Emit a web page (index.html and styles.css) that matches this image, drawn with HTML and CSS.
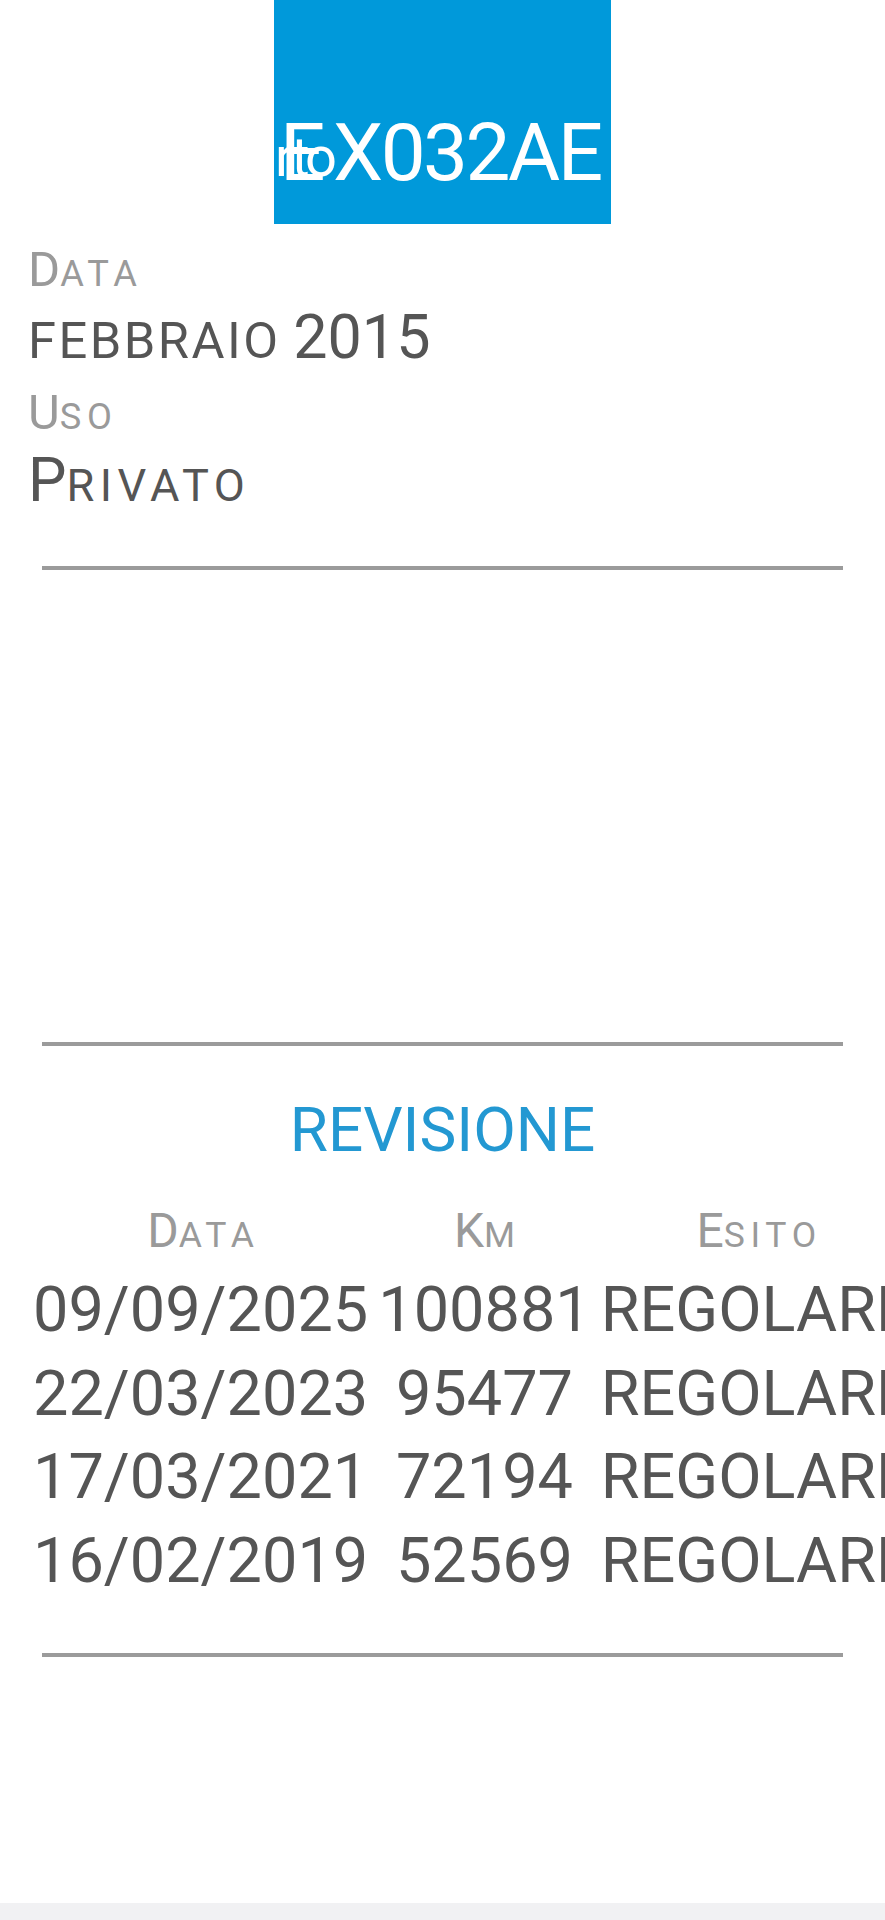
FILE: index.html
```html
<!DOCTYPE html>
<html lang="it">
<head>
<meta charset="utf-8">
<title>Veicolo EX032AE</title>
<link rel="stylesheet" href="styles.css">
</head>
<body>
<div class="page">
  <div class="plate">
    <span class="plate-text"><span class="plate-first">E</span>X032AE</span>
    <span class="ghost">rto</span>
  </div>

  <div class="info">
    <div class="field">
      <div class="label">D<span class="sc">ata</span></div>
      <div class="value"><span class="sc-month">febbraio</span> 2015</div>
    </div>
    <div class="field">
      <div class="label">U<span class="sc">so</span></div>
      <div class="value">P<span class="sc-value">rivato</span></div>
    </div>
  </div>

  <div class="rule rule-info"></div>
  <div class="rule rule-section"></div>

  <h2 class="section-title">REVISIONE</h2>

  <div class="table">
    <div class="cell th">D<span class="sc">ata</span></div>
    <div class="cell th">K<span class="sc">m</span></div>
    <div class="cell th">E<span class="sc">sito</span></div>

    <div class="cell td">09/09/2025</div>
    <div class="cell td">100881</div>
    <div class="cell td">REGOLARE</div>

    <div class="cell td">22/03/2023</div>
    <div class="cell td">95477</div>
    <div class="cell td">REGOLARE</div>

    <div class="cell td">17/03/2021</div>
    <div class="cell td">72194</div>
    <div class="cell td">REGOLARE</div>

    <div class="cell td">16/02/2019</div>
    <div class="cell td">52569</div>
    <div class="cell td">REGOLARE</div>
  </div>

  <div class="rule rule-end"></div>
</div>
</body>
</html>
```

FILE: styles.css
```css
* {
  box-sizing: border-box;
}

html,
body {
  margin: 0;
  padding: 0;
}

body {
  background: #f1f1f3;
  font-family: Roboto, "Liberation Sans", Arial, sans-serif;
}

.page {
  height: 1903px;
  background: #ffffff;
  overflow: hidden;
}

/* Plate header */
.plate {
  position: relative;
  width: 337px;
  height: 224px;
  margin: 0 auto;
  padding: 113px 0 0 6px;
  background: #0099da;
  color: #ffffff;
  white-space: nowrap;
  font-size: 80px;
  line-height: 80px;
  letter-spacing: -2.5px;
}

.plate-first {
  margin-right: 10px;
}

.ghost {
  position: absolute;
  left: 1px;
  top: 129px;
  font-size: 56px;
  line-height: 56px;
  letter-spacing: -4px;
}

/* Info fields */
.info {
  padding: 17px 0 0 28px;
}

.field + .field {
  margin-top: 8px;
}

.label {
  font-size: 49px;
  line-height: 57px;
  color: #9a9a9a;
}

.value {
  font-size: 61px;
  line-height: 78px;
  color: #555555;
}

.sc,
.sc-month,
.sc-value {
  text-transform: uppercase;
  line-height: 1;
}

.sc {
  font-size: 0.74em;
  letter-spacing: 0.16em;
  margin-right: -0.16em;
}

.sc-month {
  font-size: 0.83em;
  letter-spacing: 2.5px;
  margin-right: -2.5px;
}

.sc-value {
  font-size: 0.74em;
  letter-spacing: 0.12em;
}

/* Rules */
.rule {
  height: 4px;
  margin: 0 42px;
  background: #9b9b9b;
}

.rule-info {
  margin-top: 47px;
}

.rule-section {
  margin-top: 472px;
}

.rule-end {
  margin-top: 51px;
}

/* Section */
.section-title {
  margin: 49px 0 0;
  font-size: 62px;
  line-height: 70px;
  font-weight: 400;
  text-align: center;
  color: #2398d2;
}

.table {
  display: grid;
  grid-template-columns: repeat(3, max-content);
  width: max-content;
  margin: 37px 0 0 28px;
}

.cell {
  padding: 0 5px;
  text-align: center;
  white-space: nowrap;
}

.th {
  padding-bottom: 9px;
  font-size: 48px;
  line-height: 57px;
  color: #9a9a9a;
}

.td {
  font-size: 63px;
  line-height: 83.5px;
  color: #555555;
}
```
